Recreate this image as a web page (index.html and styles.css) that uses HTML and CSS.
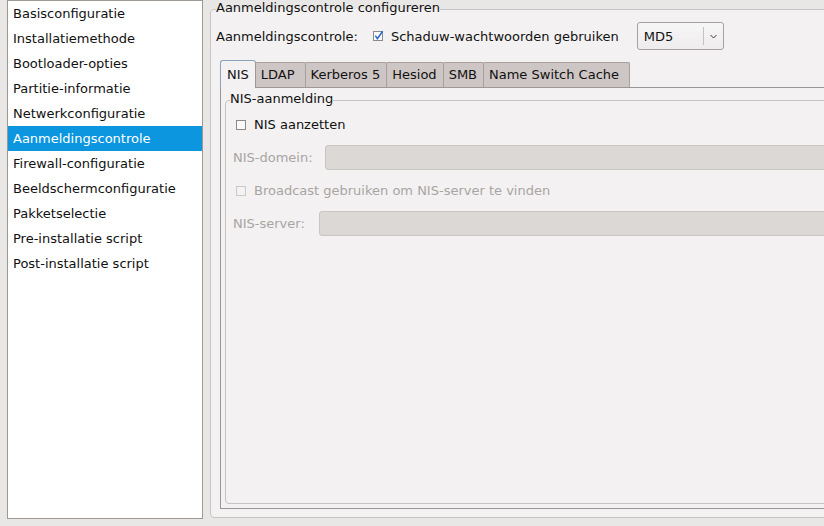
FILE: index.html
```html
<!DOCTYPE html>
<html lang="nl">
<head>
<meta charset="utf-8">
<title>Kickstart-configuratie</title>
<link rel="stylesheet" href="styles.css">
</head>
<body>
<div class="app">
  <ul class="nav">
    <li>Basisconfiguratie</li>
    <li>Installatiemethode</li>
    <li>Bootloader-opties</li>
    <li>Partitie-informatie</li>
    <li>Netwerkconfiguratie</li>
    <li class="sel">Aanmeldingscontrole</li>
    <li>Firewall-configuratie</li>
    <li>Beeldschermconfiguratie</li>
    <li>Pakketselectie</li>
    <li>Pre-installatie script</li>
    <li>Post-installatie script</li>
  </ul>

  <fieldset class="frame">
    <legend class="frame-title">Aanmeldingscontrole configureren</legend>
    <div class="auth-row">
      <span class="auth-label">Aanmeldingscontrole:</span>
      <span class="check">
        <svg class="cb" width="12" height="12" viewBox="0 0 12 12"><rect x="0.5" y="1.5" width="9" height="9" fill="#fbfafa" stroke="#8e8a88"/><path d="M2.3 5.6 L4.4 8.6 L9.6 1.2" fill="none" stroke="#2a67cf" stroke-width="1.5"/></svg>
        <span>Schaduw-wachtwoorden gebruiken</span>
      </span>
      <div class="combo">
        <span class="combo-val">MD5</span>
        <span class="combo-sep"></span>
        <svg class="combo-arrow" width="7" height="5" viewBox="0 0 7 5"><path d="M0.5 1 L3.5 4 L6.5 1" fill="none" stroke="#3a3a3a" stroke-width="1"/></svg>
      </div>
    </div>

    <div class="notebook">
      <div class="tabs">
        <div class="tab active">NIS</div>
        <div class="tab tab-ldap">LDAP</div>
        <div class="tab">Kerberos 5</div>
        <div class="tab">Hesiod</div>
        <div class="tab">SMB</div>
        <div class="tab tab-nsc">Name Switch Cache</div>
      </div>
      <div class="page">
        <fieldset class="inner">
          <legend class="inner-title">NIS-aanmelding</legend>
          <div class="row-check">
            <svg class="cb" width="12" height="12" viewBox="0 0 12 12"><rect x="0.5" y="1.5" width="9" height="9" fill="#fbfafa" stroke="#8e8a88"/></svg>
            <span>NIS aanzetten</span>
          </div>
          <div class="row-field">
            <span class="dim">NIS-domein:</span>
            <span class="entry"></span>
          </div>
          <div class="row-check dim">
            <svg class="cb" width="12" height="12" viewBox="0 0 12 12"><rect x="0.5" y="1.5" width="9" height="9" fill="#f4f2f2" stroke="#ccc8c6"/></svg>
            <span>Broadcast gebruiken om NIS-server te vinden</span>
          </div>
          <div class="row-field row-server">
            <span class="dim">NIS-server:</span>
            <span class="entry"></span>
          </div>
        </fieldset>
      </div>
    </div>
  </fieldset>
</div>
</body>
</html>
```

FILE: styles.css
```css
html, body {
  margin: 0;
  padding: 0;
  width: 824px;
  height: 526px;
  overflow: hidden;
}

body {
  background: #e9e7e5;
  font-family: "DejaVu Sans", "Liberation Sans", sans-serif;
  font-size: 13px;
  color: #111;
}

.app {
  display: flex;
  align-items: flex-start;
  gap: 7px;
  padding-left: 7px;
  width: 900px;
}

/* left navigation list */
.nav {
  list-style: none;
  margin: 0;
  padding: 0;
  flex: none;
  width: 196px;
  height: 519px;
  box-sizing: border-box;
  border: 1px solid #9f9995;
  background: #fff;
}

.nav li {
  height: 25px;
  line-height: 25px;
  padding-left: 5px;
  white-space: nowrap;
}

.nav li.sel {
  background: #0b96df;
  color: #fff;
}

/* outer frame */
.frame {
  flex: none;
  width: 640px;
  min-inline-size: 0;
  margin: 0;
  padding: 4px 8px 8px 5px;
  border: 1px solid #c8c4c2;
  border-radius: 4px;
  background: #f3f1f1;
}

.frame-title {
  padding: 0 0 2px;
  margin-left: 0;
  line-height: 16px;
}

.auth-row {
  display: flex;
  align-items: center;
  height: 28px;
}

.auth-label {
  margin-right: 15px;
}

.check {
  display: flex;
  align-items: center;
  gap: 6px;
}

.cb {
  display: block;
  overflow: visible;
  flex: none;
}

.combo {
  margin-left: 18px;
  width: 87px;
  height: 28px;
  box-sizing: border-box;
  border: 1px solid #a7a19e;
  border-radius: 3px;
  background: linear-gradient(#f7f6f6, #eeecec);
  display: flex;
  align-items: center;
  padding-left: 6px;
}

.combo-val {
  width: 59px;
}

.combo-sep {
  width: 1px;
  height: 18px;
  background: #c6c1be;
  margin-right: 6px;
}

.combo-arrow {
  display: block;
}

/* notebook */
.notebook {
  margin: 10px 0 0 4px;
}

.tabs {
  display: flex;
  align-items: flex-end;
  height: 27px;
}

.tab {
  height: 25px;
  box-sizing: border-box;
  padding: 0 6px 0 5px;
  line-height: 23px;
  border: 1px solid #a6a09d;
  border-bottom: none;
  border-radius: 2px 2px 0 0;
  background: #cdc6c4;
  margin-left: -1px;
  white-space: nowrap;
}

.tab.active {
  margin-left: 0;
  height: 28px;
  margin-bottom: -1px;
  padding: 2px 6px 0 6px;
  line-height: 24px;
  background: #f3f1f1;
  border-color: #8aa3bb #9d9795 #9d9795 #8aa3bb;
  border-radius: 3px 3px 0 0;
  position: relative;
  z-index: 1;
}

.tab-ldap {
  padding-right: 10px;
}

.tab-nsc {
  padding-right: 10px;
}

.page {
  height: 422px;
  box-sizing: border-box;
  border: 1px solid #9c9794;
  background: #f3f1f1;
  padding: 3px 0 4px 4px;
  display: flex;
  flex-direction: column;
}

/* inner frame */
.inner {
  flex: 1;
  min-inline-size: 0;
  margin: 0;
  padding: 4px 0 0 7px;
  border: 1px solid #c6c2c0;
  border-radius: 4px;
}

.inner-title {
  padding: 0 0 2px;
  margin-left: -3px;
  line-height: 16px;
}

.row-check {
  display: flex;
  align-items: center;
  gap: 6px;
  height: 22px;
  padding-left: 3px;
}

.row-check .cb {
  margin-top: 1px;
}

.row-field {
  display: flex;
  align-items: center;
  gap: 12px;
  margin: 10px 0 9px;
}

.row-server {
  margin: 10px 0 0;
  gap: 14px;
}

.dim {
  color: #a9a5a3;
}

.entry {
  flex: 1;
  height: 25px;
  box-sizing: border-box;
  border: 1px solid #c9c5c3;
  border-radius: 3px;
  background: #dcd8d6;
}
```
